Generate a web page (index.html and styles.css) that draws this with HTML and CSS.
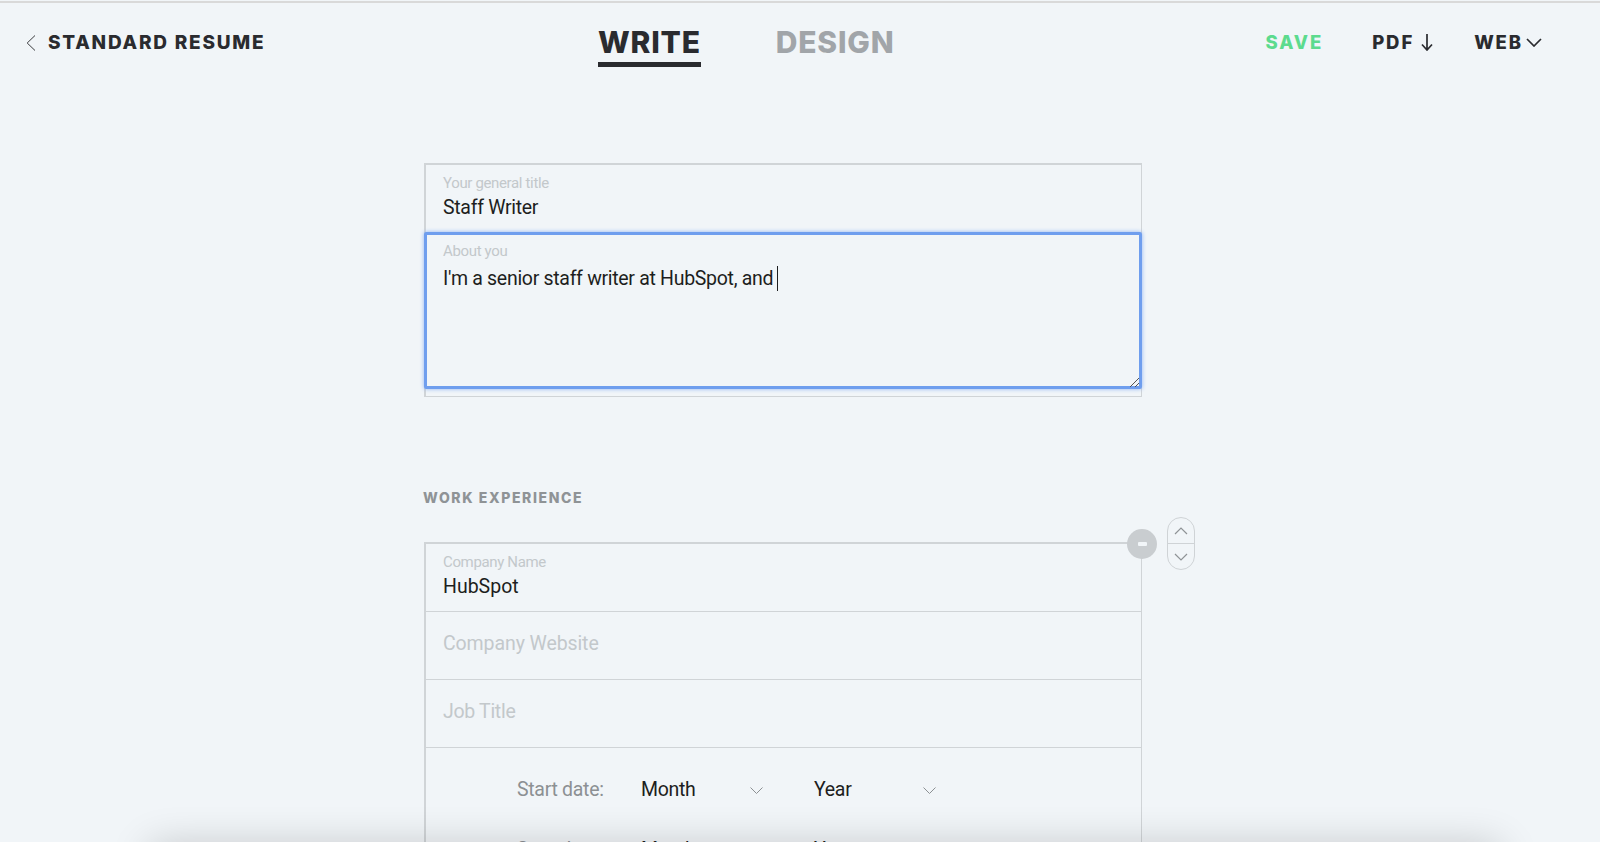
FILE: index.html
```html
<!DOCTYPE html>
<html lang="en">
<head>
  <meta charset="UTF-8" />
  <title>Standard Resume - Write</title>
  <link rel="stylesheet" href="styles.css">
</head>
<body>
  <header class="topbar">
    <a class="back">
      <svg class="back-icon" width="10" height="16" viewBox="0 0 10 16"><path d="M9 .5 1.2 8 9 15.5" /></svg>
      STANDARD RESUME
    </a>
    <nav class="tabs">
      <a class="tab active">WRITE</a>
      <a class="tab">DESIGN</a>
    </nav>
    <div class="actions">
      <a class="action save">SAVE</a>
      <a class="action">PDF
        <svg class="action-icon" width="12" height="17" viewBox="0 0 12 17"><path d="M6 0v15.5M1 10.5l5 5.5 5-5.5" /></svg>
      </a>
      <a class="action web">WEB
        <svg class="action-icon" width="16" height="9" viewBox="0 0 16 9"><path d="M1 1l7 7 7-7" /></svg>
      </a>
    </div>
  </header>

  <main class="form">
    <section class="box intro">
      <div class="field">
        <label>Your general title</label>
        <div class="value">Staff Writer</div>
      </div>
      <div class="field about">
        <label>About you</label>
        <div class="value about-text">I'm a senior staff writer at HubSpot, and <span class="caret"></span></div>
        <svg class="grip" width="11" height="11" viewBox="0 0 11 11"><path d="M1 10 10 1M6 10l4-4" /></svg>
      </div>
    </section>

    <h3 class="section-title">WORK EXPERIENCE</h3>

    <section class="box job">
      <div class="job-tools">
        <span class="remove"><span class="remove-bar"></span></span>
        <div class="mover">
          <span class="mover-btn">
            <svg width="14" height="8" viewBox="0 0 14 8"><path d="M1 7l6-6 6 6" /></svg>
          </span>
          <span class="mover-btn">
            <svg width="14" height="8" viewBox="0 0 14 8"><path d="M1 1l6 6 6-6" /></svg>
          </span>
        </div>
      </div>
      <div class="field row company">
        <label>Company Name</label>
        <div class="value">HubSpot</div>
      </div>
      <div class="field row empty website">Company Website</div>
      <div class="field row empty">Job Title</div>
      <div class="dates">
        <div class="date-row">
          <span class="date-label">Start date:</span>
          <span class="select month">Month
            <svg width="13" height="7" viewBox="0 0 13 7"><path d="M.5.5l6 6 6-6" /></svg>
          </span>
          <span class="select year">Year
            <svg width="13" height="7" viewBox="0 0 13 7"><path d="M.5.5l6 6 6-6" /></svg>
          </span>
        </div>
        <div class="date-row">
          <span class="date-label">Stop date:</span>
          <span class="select month">Month
            <svg width="13" height="7" viewBox="0 0 13 7"><path d="M.5.5l6 6 6-6" /></svg>
          </span>
          <span class="select year">Year
            <svg width="13" height="7" viewBox="0 0 13 7"><path d="M.5.5l6 6 6-6" /></svg>
          </span>
        </div>
      </div>
    </section>
  </main>

  <div class="bottom-shadow"></div>
</body>
</html>
```

FILE: styles.css
```css
*, *::before, *::after { margin: 0; padding: 0; box-sizing: border-box; }

html, body {
  height: 842px;
  overflow: hidden;
}

body {
  background: #f1f5f8;
  border-top: 2px solid #d9d9d9;
  margin-top: 1px;
  font-family: 'Roboto', sans-serif;
  color: #1d1e20;
}

svg { fill: none; stroke: currentColor; }

.topbar {
  height: 78px;
  padding: 0 58px 0 26px;
  display: grid;
  grid-template-columns: 572px auto 1fr;
  align-items: start;
  font-family: 'Inter', sans-serif;
  font-weight: 800;
  color: #2a2b2f;
}

.back {
  display: flex;
  align-items: center;
  gap: 12px;
  padding-top: 28px;
  font-size: 19px;
  line-height: 24px;
  letter-spacing: 1.77px;
}

.back-icon { color: #3a3b3e; }

.tabs {
  display: flex;
  gap: 75px;
  padding-top: 20px;
}

.tab {
  font-weight: 800;
  font-size: 30px;
  line-height: 39px;
  letter-spacing: 0.8px;
  color: #a1a5a9;
}

.tab.active {
  color: #2a2b2f;
  border-bottom: 5px solid #2a2b2f;
}

.actions {
  display: flex;
  justify-content: flex-end;
  padding-top: 27px;
  font-size: 18.5px;
  line-height: 24px;
  letter-spacing: 1.9px;
}

.action {
  display: flex;
  align-items: center;
  gap: 7px;
}

.action.save { color: #5cdb8e; margin-right: 49px; }
.action.web { gap: 3px; margin-left: 41px; }
.action-icon { stroke-width: 1.7; }

.form {
  width: 718px;
  margin: 82px 0 0 424px;
}

.box {
  border: 1px solid #d0d4d7;
  border-width: 2px 1px 0 2px;
}

.intro {
  height: 234px;
  border-bottom: 1px solid #d0d4d7;
}

.field {
  position: relative;
  padding: 9px 17px 0;
  height: 67px;
  color: #1d1e20;
}

.field label {
  display: block;
  font-size: 15px;
  line-height: 18px;
  letter-spacing: -0.35px;
  color: #c3c8cb;
}

.value {
  font-size: 19.5px;
  line-height: 24px;
  letter-spacing: -0.3px;
  margin-top: 4px;
}

.about {
  height: 157px;
  margin: 0 -1px 0 -2px;
  padding: 7px 16px 0;
  border: 3px solid #6f9eee;
  border-radius: 2px;
  box-shadow: 0 0 4px #8fb4f2;
}

.about-text {
  margin-top: 6px;
}

.caret {
  display: inline-block;
  width: 1px;
  height: 25px;
  margin-left: -1px;
  background: #1d1e20;
  vertical-align: -6px;
}

.grip {
  position: absolute;
  right: -1px;
  bottom: -2px;
  color: #555;
  stroke-width: 1;
}

.section-title {
  margin: 92px 0 35px -1px;
  font-family: 'Inter', sans-serif;
  font-size: 14px;
  line-height: 18px;
  font-weight: 800;
  letter-spacing: 1.6px;
  color: #8f9396;
}

.job {
  position: relative;
  height: 400px;
}

.job-tools {
  position: absolute;
  left: 701px;
  top: -27px;
  display: flex;
  align-items: flex-start;
  gap: 10px;
}

.remove {
  width: 30px;
  height: 30px;
  margin-top: 12px;
  border-radius: 50%;
  background: #c9cdd0;
  display: flex;
  align-items: center;
  justify-content: center;
}

.remove-bar {
  width: 9px;
  height: 4px;
  border-radius: 1px;
  background: #f1f5f8;
}

.mover {
  width: 28px;
  height: 53px;
  border: 1px solid #cfd3d6;
  border-radius: 14px;
  display: flex;
  flex-direction: column;
  background: #f1f5f8;
}

.mover-btn {
  flex: 1;
  display: flex;
  align-items: center;
  justify-content: center;
  color: #8f9396;
  stroke-width: 1.2;
}

.mover-btn + .mover-btn { border-top: 1px solid #cfd3d6; }

.row {
  height: 68px;
  border-bottom: 1px solid #d0d4d7;
}

.company .value { letter-spacing: 0; }

.empty {
  padding-top: 19px;
  font-size: 19.5px;
  line-height: 26px;
  letter-spacing: -0.3px;
  color: #c3c8cb;
}

.website { letter-spacing: -0.1px; }

.dates {
  padding: 30px 0 0 91px;
}

.date-row {
  display: flex;
  height: 60px;
  align-items: flex-start;
  font-size: 19.5px;
  line-height: 24px;
  letter-spacing: -0.3px;
}

.date-label {
  width: 124px;
  color: #8c9093;
}

.select {
  display: flex;
  align-items: center;
  justify-content: space-between;
}

.select svg { color: #8c9093; }

.month { width: 122px; margin-right: 51px; }
.year { width: 122px; }

.bottom-shadow {
  position: fixed;
  left: 150px;
  right: 100px;
  top: 846px;
  height: 40px;
  box-shadow: 0 0 40px rgba(0, 0, 0, 0.2);
}
```
